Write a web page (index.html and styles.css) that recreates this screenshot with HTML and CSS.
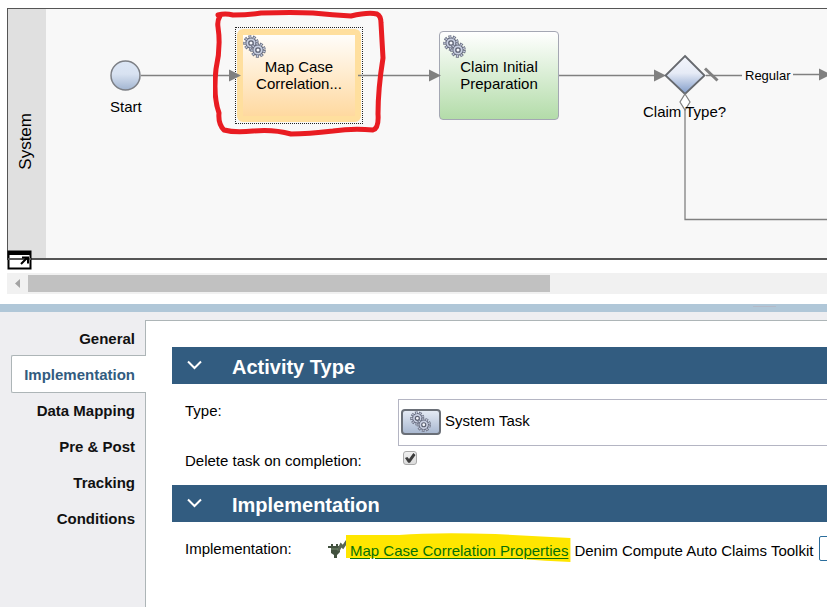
FILE: index.html
```html
<!DOCTYPE html>
<html lang="en">
<head>
<meta charset="utf-8">
<title>Process designer</title>
<link rel="stylesheet" href="styles.css">
</head>
<body>
<svg class="defs" aria-hidden="true">
  <defs>
    <symbol id="gear" viewBox="0 0 16 16">
      <g fill="none">
        <circle cx="8" cy="8" r="6.4" stroke="#6d7284" stroke-width="2.8" stroke-dasharray="2.9 1.568"/>
        <circle cx="8" cy="8" r="5.2" fill="#c9d0e2" stroke="#656a7d" stroke-width="1.2"/>
        <circle cx="8" cy="8" r="6.1" stroke="#c9d0e2" stroke-width="2" stroke-dasharray="1.1 3.159" stroke-dashoffset="-.9"/>
        <circle cx="8" cy="8" r="2.2" fill="#f4f6fb" stroke="#5c6172" stroke-width="1.3"/>
      </g>
    </symbol>
    <symbol id="gears" viewBox="0 0 24 24">
      <use href="#gear" x="0" y="0" width="16" height="16"/>
      <use href="#gear" x="7" y="7" width="16" height="16"/>
    </symbol>
  </defs>
</svg>

<main class="designer">
  <section class="diagram">
    <div class="lane">
      <div class="lane-head"><span>System</span></div>
      <div class="canvas">
        <svg class="wires" aria-hidden="true">
          <defs>
            <linearGradient id="blue" x1="0" y1="0" x2="0" y2="1">
              <stop offset="0" stop-color="#dce6f5"/>
              <stop offset=".45" stop-color="#d8e2f1"/>
              <stop offset="1" stop-color="#a2b5d1"/>
            </linearGradient>
            <linearGradient id="gate" x1="0" y1="0" x2="0" y2="1">
              <stop offset="0" stop-color="#f4f6fc"/>
              <stop offset=".45" stop-color="#e6ebf6"/>
              <stop offset="1" stop-color="#7f9bc9"/>
            </linearGradient>
          </defs>
          <g transform="translate(-46 -9)">
            <g fill="none" stroke="#808080" stroke-width="1.3">
              <path d="M141 75.5H232M358 75.5H432M559 75.5H656M706 75.5H742M793 74.5H822"/>
              <path d="M685 110V219.5H2000"/>
            </g>
            <path d="M229 69.5l12 6-12 6zM429 69.5l12 6-12 6zM654 69.5l12 6-12 6zM819 68.5l12 6-12 6z" fill="#808080"/>
            <path d="M705 68.5l12.5 12" stroke="#808080" stroke-width="3"/>
            <circle cx="125.5" cy="75.5" r="14.5" fill="url(#blue)" stroke="#7c7f85" stroke-width="1.5"/>
            <path d="M685 56l19.5 19.5L685 94l-19.5-18.5z" fill="url(#gate)" stroke="#66696e" stroke-width="1.8"/>
            <path d="M685 94l5 8-5 8-5-8z" fill="#fff" stroke="#808080" stroke-width="1.2"/>
          </g>
        </svg>
        <span class="caption start">Start</span>
        <div class="task selected">
          <div class="task-face"><svg class="gears"><use href="#gears"/></svg>Map Case<br>Correlation...</div>
        </div>
        <div class="task prepare"><svg class="gears"><use href="#gears"/></svg>Claim Initial<br>Preparation</div>
        <span class="caption claim-type">Claim Type?</span>
        <span class="caption regular">Regular</span>
        <svg class="marker" viewBox="0 0 174 128" aria-hidden="true">
          <path d="M5 6Q12 4 20 6Q35 6 48 4Q80 3 100 4Q120 6 138 7Q155 3 164 5Q168 7 168 14L170 49Q165 80 165 105Q166 119 160 121Q140 119 120 122Q95 125 78 125Q60 120 40 122Q22 124 11 121Q5 115 6 104Q0 88 3 60Q8 38 5 18Q4 12 7 7" fill="none" stroke="#e91c22" stroke-width="5" stroke-linejoin="round" stroke-linecap="round"/>
        </svg>
      </div>
    </div>
    <button class="popout" aria-label="Open in window">
      <svg viewBox="0 0 25 20" width="25" height="20">
        <path d="M1.5 1.5h22v17h-22z" fill="#fff" stroke="#000" stroke-width="2"/>
        <path d="M1 1h23v4H1z"/>
        <path d="M1 9h23" stroke="#555" stroke-width="2"/>
        <path d="M14 14l6-6M15 7.5h6v6" fill="none" stroke="#000" stroke-width="2"/>
      </svg>
    </button>
  </section>

  <div class="scrollbar">
    <svg viewBox="0 0 21 21" width="21" height="21" aria-hidden="true"><path d="M13 6v9l-5-4.5z" fill="#a3a3a3"/></svg>
    <div class="thumb"></div>
  </div>

  <div class="splitter"><i></i></div>

  <section class="properties">
    <nav class="tabs">
      <a href="#">General</a>
      <a href="#" class="active" aria-current="page">Implementation</a>
      <a href="#">Data Mapping</a>
      <a href="#">Pre &amp; Post</a>
      <a href="#">Tracking</a>
      <a href="#">Conditions</a>
    </nav>
    <div class="pane">
      <h2><svg viewBox="0 0 16 10" width="16" height="10" aria-hidden="true"><path d="M1 1.5l6.5 6.500 6.500-6.500"/></svg>Activity Type</h2>
      <div class="fields">
        <span class="label">Type:</span>
        <div class="type-box">
          <span class="type-icon"><svg width="22" height="22"><use href="#gears"/></svg></span>
          System Task
        </div>
        <label class="label" for="delete-task">Delete task on completion:</label>
        <input type="checkbox" id="delete-task" checked>
      </div>
      <h2><svg viewBox="0 0 16 10" width="16" height="10" aria-hidden="true"><path d="M1 1.5l6.5 6.500 6.500-6.500"/></svg>Implementation</h2>
      <div class="implementation">
        <span class="label">Implementation:</span>
        <div class="service">
          <svg class="plug" viewBox="0 0 20 20" width="20" height="20" aria-hidden="true">
            <path d="M0 7h3V5h2v2h3V5h2v2h3v2h-1v4l-3 3v3H6v-3l-3-2V9H0z" fill="#42513f"/>
            <path d="M10 12l3-6 2 2 4-6" fill="none" stroke="#586653" stroke-width="3"/>
            <path d="M3 10h7" stroke="#789072"/>
          </svg>
          <span class="highlighted">
            <svg viewBox="0 0 226 29" preserveAspectRatio="none" aria-hidden="true"><path d="M1 2L54 2Q90-1 150 1L225 5V29Q200 28 175 26L1 25z" fill="#ffe600"/></svg>
            <a href="#">Map Case Correlation Properties</a>
          </span>
          <span>Denim Compute Auto Claims Toolkit</span>
          <button class="select" aria-label="Select service"></button>
        </div>
      </div>
    </div>
  </section>
</main>
</body>
</html>
```
FILE: styles.css
```css
* { box-sizing: border-box; }

body {
  margin: 0;
  background: #fff;
  color: #000;
  font: 15px/17px "Liberation Sans", Arial, sans-serif;
}

.defs { position: absolute; width: 0; height: 0; }

.designer {
  display: flex;
  flex-direction: column;
  min-height: 100vh;
  overflow: hidden;
}

/* Diagram */
.diagram { position: relative; padding: 8px 0 0 7px; }

.lane {
  display: flex;
  height: 252px;
  border: 1px solid #555;
  border-width: 1px 0 2px 1px;
}

.lane-head {
  display: flex;
  align-items: center;
  justify-content: center;
  width: 38px;
  padding: 15px 4px 0 0;
  background: #e0e0e0;
  font-size: 17px;
}

.lane-head span { writing-mode: vertical-rl; transform: rotate(180deg); }

.canvas {
  position: relative;
  flex: 1;
  overflow: hidden;
  background: #f8f8f8;
}

.wires {
  position: absolute;
  z-index: 1;
  inset: 0;
  width: 100%;
  height: 100%;
}

.caption { position: absolute; z-index: 2; white-space: nowrap; }
.start { left: 64px; top: 89px; }
.claim-type { left: 597px; top: 94px; }
.regular { left: 699px; top: 58px; font-size: 13px; }

.task { position: absolute; text-align: center; }

.selected {
  left: 189px;
  top: 18px;
  width: 128px;
  height: 97px;
  border: 1px dotted #222;
  padding: 1px;
}

.task-face {
  position: relative;
  height: 100%;
  padding-top: 23px;
  border: 6px solid #ffdf9e;
  border-radius: 6px;
  background: linear-gradient(#fffdfa, #ffd9a0);
}

.prepare {
  left: 393px;
  top: 22px;
  width: 120px;
  height: 89px;
  padding-top: 26px;
  border: 1px solid #a4a7b3;
  border-radius: 4px;
  background: linear-gradient(#fff, #b3dca9);
}

.gears { position: absolute; left: 3px; top: 3px; width: 24px; height: 24px; }
.task-face .gears { left: 0; top: 0; }

.marker {
  position: absolute;
  z-index: 3;
  left: 167px;
  top: 0;
  width: 174px;
  height: 128px;
}

.popout {
  position: absolute;
  left: 7px;
  top: 250px;
  padding: 0;
  border: 0;
  background: none;
}

.popout svg { display: block; }

.scrollbar {
  display: flex;
  align-items: center;
  height: 21px;
  margin: 13px 0 10px 7px;
  background: #f1f1f1;
}

.thumb { width: 522px; height: 17px; background: #c1c1c1; }

.splitter {
  display: flex;
  justify-content: flex-end;
  height: 8px;
  padding: 2px 51px 0 0;
  background: #b0c7d8;
}

.splitter i { width: 23px; height: 1px; background: #b3bac8; }

/* Properties */
.properties {
  display: flex;
  flex: 1;
  padding-top: 8px;
  background: #eeeef1;
}

.tabs {
  position: relative;
  z-index: 1;
  display: flex;
  flex-direction: column;
  width: 146px;
  margin-right: -1px;
}

.tabs a {
  height: 36px;
  padding: 0 11px 0 0;
  color: #111;
  font-weight: bold;
  line-height: 38px;
  text-align: right;
  text-decoration: none;
}

.tabs .active {
  height: 38px;
  margin: -1px 0 -1px 11px;
  border: 1px solid #adb5b7;
  border-right: 0;
  border-radius: 2px 0 0 2px;
  background: #fff;
  color: #325c80;
}

.pane {
  flex: 1;
  min-width: 0;
  padding: 26px 0 0 26px;
  border: 1px solid #adb5b7;
  border-width: 1px 0 0 1px;
  background: #fff;
}

h2 {
  display: flex;
  align-items: center;
  gap: 29px;
  height: 37px;
  margin: 0;
  padding: 2px 0 0 15px;
  background: #325c80;
  color: #fff;
  font-size: 20px;
  line-height: 24px;
}

h2 svg { fill: none; stroke: #fff; stroke-width: 2; margin-top: -4px; }

.fields {
  display: grid;
  grid-template-columns: 213px 1fr;
  row-gap: 5px;
  padding: 15px 0 16px 13px;
}

.fields .label { padding-top: 1px; }
.fields .label:first-child { padding-top: 3px; }

.type-box {
  display: flex;
  gap: 4px;
  height: 47px;
  padding: 9px 2px;
  border: 1px solid #b4b5c3;
  border-right: 0;
  line-height: 24px;
}

.type-icon {
  display: flex;
  align-items: center;
  justify-content: center;
  width: 40px;
  height: 26px;
  border: 2px solid #6a6f77;
  border-radius: 4px;
  background: linear-gradient(#e4eaf4, #aab9d1);
}

input[type="checkbox"] {
  appearance: none;
  width: 14px;
  height: 14px;
  margin: 0 0 0 5px;
  border: 1px solid #aaa;
  border-radius: 3px;
  background: linear-gradient(#f0f0f0, #dcdcdc);
}

input[type="checkbox"]:checked::before {
  content: "";
  display: block;
  width: 12px;
  height: 12px;
  background: #3d3d3d;
  clip-path: polygon(8% 50%, 28% 42%, 42% 58%, 78% 8%, 96% 24%, 50% 90%, 35% 90%);
}

.implementation {
  display: grid;
  grid-template-columns: 143px 1fr;
  padding: 14px 0 0 13px;
}

.implementation .label { padding-top: 4px; }

.service {
  display: flex;
  align-items: center;
  gap: 6px;
  height: 28px;
  white-space: nowrap;
}

.plug { flex: none; margin: -2px -4px 0 0; }

.highlighted { position: relative; }

.highlighted svg {
  position: absolute;
  left: -5px;
  top: -9px;
  width: calc(100% + 8px);
  height: 29px;
}

.highlighted a {
  position: relative;
  color: #067006;
  text-underline-offset: 2px;
}

.select {
  flex: none;
  width: 80px;
  height: 25px;
  margin-top: -4px;
  border: 1px solid #2a6d9c;
  border-radius: 2px;
  background: #fff;
}
```
